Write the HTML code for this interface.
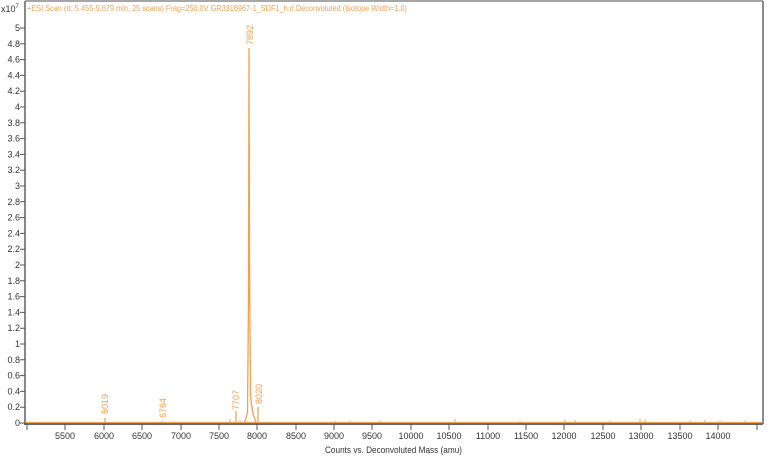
<!DOCTYPE html>
<html><head><meta charset="utf-8"><style>
html,body{margin:0;padding:0;background:#fff;}
svg{display:block;font-family:"Liberation Sans",Arial,sans-serif;}
</style></head><body>
<svg width="768" height="457" viewBox="0 0 768 457" xmlns="http://www.w3.org/2000/svg">
<rect x="0" y="0" width="768" height="457" fill="#fff"/>
<line x1="25" y1="1" x2="763" y2="1" stroke="#888" stroke-width="1.5"/>
<line x1="763" y1="1" x2="763" y2="424" stroke="#666" stroke-width="1.5"/>
<line x1="25" y1="1" x2="25" y2="425" stroke="#888" stroke-width="2"/>
<line x1="24" y1="424" x2="763" y2="424" stroke="#666" stroke-width="2"/>
<text x="1" y="12" font-size="9" fill="#333">x10<tspan font-size="6" dy="-4">7</tspan></text>
<text x="27" y="11" font-size="8.5" fill="#F0A050" textLength="380" lengthAdjust="spacingAndGlyphs">+ESI Scan (rt: 5.455-5.679 min, 25 scans) Frag=250.0V GR3316967-1_SDF1_h.d  Deconvoluted (Isotope Width=1.0)</text>
<g font-size="9" fill="#333" text-anchor="end">
<text x="20" y="426">0</text><text x="20" y="410.2">0.2</text><text x="20" y="394.4">0.4</text><text x="20" y="378.6">0.6</text><text x="20" y="362.8">0.8</text><text x="20" y="347">1</text><text x="20" y="331.2">1.2</text><text x="20" y="315.4">1.4</text><text x="20" y="299.6">1.6</text><text x="20" y="283.8">1.8</text><text x="20" y="268">2</text><text x="20" y="252.2">2.2</text><text x="20" y="236.4">2.4</text><text x="20" y="220.6">2.6</text><text x="20" y="204.8">2.8</text><text x="20" y="189">3</text><text x="20" y="173.2">3.2</text><text x="20" y="157.4">3.4</text><text x="20" y="141.6">3.6</text><text x="20" y="125.8">3.8</text><text x="20" y="110">4</text><text x="20" y="94.2">4.2</text><text x="20" y="78.4">4.4</text><text x="20" y="62.6">4.6</text><text x="20" y="46.8">4.8</text><text x="20" y="31">5</text>
</g>
<g stroke="#555" stroke-width="1">
<path d="M20 423H25M20 407.2H25M20 391.4H25M20 375.6H25M20 359.8H25M20 344H25M20 328.2H25M20 312.4H25M20 296.6H25M20 280.8H25M20 265H25M20 249.2H25M20 233.4H25M20 217.6H25M20 201.8H25M20 186H25M20 170.2H25M20 154.4H25M20 138.6H25M20 122.8H25M20 107H25M20 91.2H25M20 75.4H25M20 59.6H25M20 43.8H25M20 28H25"/>
<path d="M27 424V430M65 424V430M104 424V430M142 424V430M181 424V430M219 424V430M257 424V430M296 424V430M334 424V430M372 424V430M411 424V430M449 424V430M488 424V430M526 424V430M564 424V430M603 424V430M641 424V430M680 424V430M718 424V430M757 424V430"/>
</g>
<g font-size="9" fill="#333" text-anchor="middle">
<text x="65" y="439">5500</text><text x="104" y="439">6000</text><text x="142" y="439">6500</text><text x="181" y="439">7000</text><text x="219" y="439">7500</text><text x="257" y="439">8000</text><text x="296" y="439">8500</text><text x="334" y="439">9000</text><text x="372" y="439">9500</text><text x="411" y="439">10000</text><text x="449" y="439">10500</text><text x="488" y="439">11000</text><text x="526" y="439">11500</text><text x="564" y="439">12000</text><text x="603" y="439">12500</text><text x="641" y="439">13000</text><text x="680" y="439">13500</text><text x="718" y="439">14000</text>
</g>
<text x="325" y="453" font-size="9" fill="#333" textLength="137" lengthAdjust="spacingAndGlyphs">Counts vs. Deconvoluted Mass (amu)</text>
<line x1="26" y1="422.5" x2="762" y2="422.5" stroke="#F0A050" stroke-width="1.2"/>
<path d="M335 421V423M350 421V423M380 420.5V423M455 419V423M520 421V423M565 419.5V423M575 420V423M610 421V423M640 419V423M645 419.5V423M690 420.5V423M705 420V423M720 420.5V423M745 420.5V423M230 419V423M240 420V423" stroke="#F0A050" stroke-width="1"/>
<g stroke="#F0A050" fill="none" stroke-width="1.3">
<path d="M105 423V418"/>
<path d="M162 423V421"/>
<path d="M236 423V411"/>
<path d="M258 423V407"/>
<path d="M244 423L246 418L247.5 412L248.5 300L249 48L249.5 260L250.5 395L251.5 404L253 414L256 422"/>
</g>
<g font-size="9" fill="#F0A050">
<text transform="translate(253,45) rotate(-90)">7892</text>
<text transform="translate(108,414) rotate(-90)">6019</text>
<text transform="translate(166,418) rotate(-90)">6764</text>
<text transform="translate(239,410) rotate(-90)">7707</text>
<text transform="translate(262,404) rotate(-90)">8020</text>
</g>
</svg>
</body></html>
